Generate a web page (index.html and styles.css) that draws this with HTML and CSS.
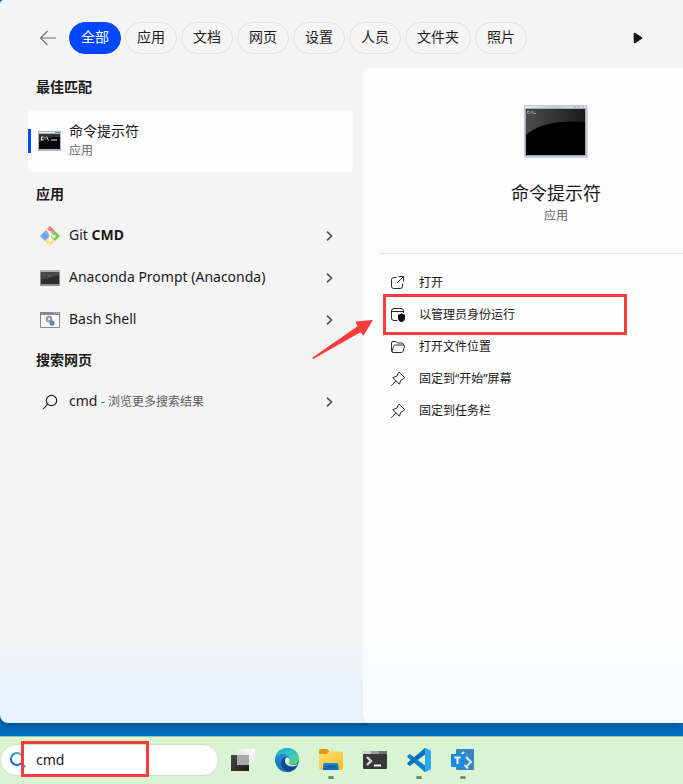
FILE: index.html
```html
<!DOCTYPE html>
<html lang="zh-CN">
<head>
<meta charset="utf-8">
<meta name="viewport" content="width=device-width, initial-scale=1">
<title>cmd</title>
<link rel="stylesheet" href="styles.css">
</head>
<body>
<svg class="defs" aria-hidden="true">
  <defs>
    <linearGradient id="ring" x1="0" y1="1" x2="1" y2="0"><stop offset="0" stop-color="#0a5fc4"/><stop offset=".5" stop-color="#1a86d8"/><stop offset="1" stop-color="#46d3a4"/></linearGradient>
    <linearGradient id="dark" x1="0" y1="0" x2="1" y2="1"><stop offset="0" stop-color="#4a4a4a"/><stop offset="1" stop-color="#1c1c1c"/></linearGradient>
    <linearGradient id="light" x1="0" y1="1" x2="1" y2="0"><stop offset="0" stop-color="#d8d8d8"/><stop offset="1" stop-color="#ffffff"/></linearGradient>
    <linearGradient id="gloss" x1="0" y1="0" x2="1" y2="0"><stop offset="0" stop-color="#4c4c4c"/><stop offset="1" stop-color="#1b1b1b"/></linearGradient>
    <linearGradient id="frame" x1="0" y1="0" x2="1" y2="0"><stop offset="0" stop-color="#e9eef3"/><stop offset=".5" stop-color="#c5ccd6"/><stop offset="1" stop-color="#e4e6ea"/></linearGradient>
    <linearGradient id="edge-top" x1="0" y1="0" x2="1" y2="1"><stop offset="0" stop-color="#24a8d4"/><stop offset=".55" stop-color="#35c5c4"/><stop offset="1" stop-color="#6ade55"/></linearGradient>
    <linearGradient id="edge-left" x1="0" y1="0" x2="0" y2="1"><stop offset="0" stop-color="#239ee0"/><stop offset="1" stop-color="#126abc"/></linearGradient>
    <linearGradient id="folder" x1="0" y1="0" x2="1" y2="1"><stop offset="0" stop-color="#ffe07a"/><stop offset="1" stop-color="#fbbc1e"/></linearGradient>
    <linearGradient id="tray" x1="0" y1="0" x2="0" y2="1"><stop offset="0" stop-color="#1b8de0"/><stop offset="1" stop-color="#0d63b5"/></linearGradient>
  </defs>
  <symbol id="chevron" viewBox="0 0 8 12"><path d="M2 1.700 6.500 6 2 10.300" fill="none" stroke="#555" stroke-width="1.700"/></symbol>
  <symbol id="pin" viewBox="0 0 16 16"><path d="M9.400 1.500 14.500 6.600 13.600 7.800 10.700 9.300 9.400 13.200 2.800 6.600 6.700 5.300 8.200 2.400ZM5.900 10 1.500 14.500" fill="none" stroke="#2c2c2c" stroke-linejoin="round" stroke-linecap="round"/></symbol>
</svg>

<main class="panel">
  <nav class="filters" aria-label="筛选">
    <button class="back" aria-label="返回"><svg width="18" height="16" viewBox="0 0 18 16"><path d="M18 8H2.500M9.500 1l-7 7 7 7" fill="none" stroke="#707070" stroke-width="1.100"/></svg></button>
    <button class="pill pill-active">全部</button>
    <button class="pill">应用</button>
    <button class="pill">文档</button>
    <button class="pill">网页</button>
    <button class="pill">设置</button>
    <button class="pill">人员</button>
    <button class="pill">文件夹</button>
    <button class="pill">照片</button>
    <button class="more" aria-label="更多"><svg width="10" height="12" viewBox="0 0 10 12"><path d="M1.500 1.500v9L8.500 6Z" fill="#151515" stroke="#151515" stroke-width="1.600" stroke-linejoin="round"/></svg></button>
  </nav>

  <div class="columns">
    <section class="results">
      <h2>最佳匹配</h2>
      <a class="best" href="#">
        <svg class="best-icon" width="24" height="20" viewBox="0 0 24 20"><path d="M0 0h23v20H0z" fill="#aeb4ba"/><path d="M1 1h16v1H1z" fill="#e8edf2"/><path d="M17 1h5v1h-5z" fill="#6f8196"/><path d="M1 3h21v15H1z" fill="#050505"/><path d="M1 3h21v3Q8 5 1 12z" fill="#343434"/><path d="M5.500 6H3.500v3h2M7 6.500v.8M7 8.300v.7M8.500 5.500l2 4M13 9h6" fill="none" stroke="#eee" stroke-width="1"/></svg>
        <span class="best-text"><span class="name">命令提示符</span><span class="kind">应用</span></span>
      </a>

      <h2>应用</h2>
      <a class="row" href="#">
        <svg class="row-icon" width="20" height="20" viewBox="0 0 20 20"><path d="m10 0 5 5-5 5-5-5z" fill="#f47c7c"/><path d="m5 5 5 5-5 5-5-5z" fill="#6fa8fa"/><path d="m15 5 5 5-5 5-5-5z" fill="#7bc853"/><path d="m10 10 5 5-5 5-5-5z" fill="#ffe27d"/><path d="M6.500 3.500 10 7v8M10 7.500l4 3" fill="none" stroke="#fff" stroke-width="1.500"/><circle cx="10" cy="6.800" r="1.700" fill="#fff"/><circle cx="10" cy="14" r="1.700" fill="#fff"/><circle cx="14" cy="10.500" r="1.700" fill="#fff"/></svg>
        <span class="name">Git <b>CMD</b></span><svg class="chevron" width="8" height="12"><use href="#chevron"/></svg>
      </a>
      <a class="row" href="#">
        <svg class="row-icon" width="20" height="16" viewBox="0 0 20 16"><path d="M0 0h20v16H0z" fill="#8d8d8d"/><path d="M0 0h20v2H0z" fill="#b0b0b0"/><path d="M1 2h18v12H1z" fill="#2b2d30"/><path d="M1 2h18v3L1 10z" fill="#45474a"/><path d="M3 5h3M8 6h3" stroke="#666"/></svg>
        <span class="name">Anaconda Prompt (Anaconda)</span><svg class="chevron" width="8" height="12"><use href="#chevron"/></svg>
      </a>
      <a class="row" href="#">
        <svg class="row-icon" width="20" height="16" viewBox="0 0 20 16"><path d="M.5.5h19v15H.5z" fill="#fafafa" stroke="#8b8b8b"/><path d="M0 0h20v3H0z" fill="#888"/><path d="M14 1h1M16 1h1M18 1h1" stroke="#eee"/><circle cx="9" cy="7" r="2.300" fill="#dbe5ef" stroke="#8a9bae" stroke-width="2"/><circle cx="12" cy="11" r="1.700" fill="#b9c5d1" stroke="#66788c" stroke-width="1.800"/></svg>
        <span class="name">Bash Shell</span><svg class="chevron" width="8" height="12"><use href="#chevron"/></svg>
      </a>

      <h2>搜索网页</h2>
      <a class="row" href="#">
        <svg class="row-icon" width="20" height="16" viewBox="0 0 20 16"><circle cx="11.500" cy="6.500" r="5.200" fill="none" stroke="#222" stroke-width="1.200"/><path d="m7.800 10.200-4.600 4.600" stroke="#222" stroke-width="1.200"/></svg>
        <span class="name">cmd <small>- 浏览更多搜索结果</small></span><svg class="chevron" width="8" height="12"><use href="#chevron"/></svg>
      </a>
    </section>

    <section class="preview">
      <div class="hero">
        <svg width="64" height="53" viewBox="0 0 64 53"><path d="M1 1h63v52H1z" fill="#d6d6d6"/><path d="M0 0h62v52H0z" fill="url(#frame)"/><path d="M.5.500h62v51H.5z" fill="none" stroke="#c3c9d2"/><path d="M49 2h3M53 2h3M58 2h2" stroke="#9da4ad"/><path d="M1 3h61v48H1z" fill="#9eabbd"/><path d="M2 4h59v46H2z" fill="#000"/><path d="M2 4h59v13Q20 14 2 30z" fill="url(#gloss)"/><path d="M5.500 6.500H3.500v2h2M7 6.500v2M8 6l1.500 3M10 8.500h2" fill="none" stroke="#aaa" stroke-width=".8"/></svg>
        <h1>命令提示符</h1>
        <p class="kind">应用</p>
      </div>
      <ul class="actions">
        <li><button><svg width="16" height="16" viewBox="0 0 16 16"><path d="M6.500 2.500H3.800Q1.500 2.500 1.500 4.800v6.400q0 2.300 2.300 2.300h6.400q2.300 0 2.300-2.300V8.500M8.500 1.500h5v5M13.300 1.700 7 8" fill="none" stroke="#2c2c2c"/></svg>打开</button></li>
        <li class="marked"><button><svg width="16" height="16" viewBox="0 0 16 16"><path d="M7.500 13.500H4Q1.500 13.500 1.500 11V4Q1.500 1.500 4 1.500h7Q13.500 1.500 13.500 4v2M1.500 4.500h12" fill="none" stroke="#2c2c2c"/><path d="M11.500 6.300q1.800 1.400 3.500 1.400v3.300q0 3-3.500 4.300Q8 14 8 11V7.700q1.800 0 3.500-1.400z" fill="#111"/></svg>以管理员身份运行</button>
          <span class="mark-box"></span>
          <svg class="mark-arrow" width="62" height="42" viewBox="0 0 62 42"><path d="M61 1 51.500 16.800 48.500 13.300 1.200 40 .2 38.800 45.500 7.200 43.500 2.500z" fill="#fc3b3b"/></svg>
        </li>
        <li><button><svg width="16" height="16" viewBox="0 0 16 16"><path d="M3 13.500Q1.500 13.200 1.500 11.500V4q0-1.500 1.500-1.500h3L7.500 4H12q1.500 0 1.500 2M3 13.500Q1.800 13 2.300 11.500L3.700 7.200Q4.100 6 5.300 6H13q1.800 0 1.400 1.800l-1.200 4.300q-.4 1.400-1.800 1.400z" fill="none" stroke="#2c2c2c" stroke-linejoin="round"/></svg>打开文件位置</button></li>
        <li><button><svg width="16" height="16"><use href="#pin"/></svg>固定到“开始”屏幕</button></li>
        <li><button><svg width="16" height="16"><use href="#pin"/></svg>固定到任务栏</button></li>
      </ul>
    </section>
  </div>
</main>

<footer class="taskbar">
  <label class="search">
    <svg width="18" height="18" viewBox="0 0 18 18"><circle cx="8" cy="8" r="6" fill="none" stroke="url(#ring)" stroke-width="2"/><path d="m12.500 12.500 3.500 3.500" stroke="#1a80d8" stroke-width="2"/></svg>
    <input type="text" value="cmd" aria-label="搜索">
    <span class="search-mark"></span>
  </label>
  <button class="task" aria-label="任务视图"><svg width="24" height="24" viewBox="0 0 24 24"><path d="M0 7h18v16H0z" fill="url(#dark)"/><path d="M6 1h18v16H6z" fill="url(#light)"/><path d="M6 7h12v10H6z" fill="#aaa"/></svg></button>
  <button class="task" aria-label="Edge"><svg width="24" height="24" viewBox="0 0 24 24"><circle cx="12" cy="12" r="12" fill="url(#edge-left)"/><path d="M.3 9.500C1.500 3.500 6.500 0 12 0c7 0 12 5 12 10.500 0 4-3 6-6.200 6-2.300 0-4-1-4-2 0-.8.9-1.200.9-2.800C14.700 8.500 11.500 6 8 6 4.500 6 1.500 7.500.3 9.500z" fill="url(#edge-top)"/><path d="M9 9.200c-3.500 2.500-4 8.300-.2 11.800 1.600 1.600 3.500 2.700 5.200 2.800 3.500-.5 6.500-2.500 8.200-5.500.4-.8-.2-1.100-.8-.8-4.800 2.300-10.500.5-11.400-4C9.700 12 10 10.600 11 9.700 10.600 9 9.800 8.700 9 9.200z" fill="#114a8d"/><path d="M10.500 10.500c-1.500 2.800.2 7 5 7.700 2.800.4 5.200-.4 6.300-1 .7-.3.700-1 .1-.8-3.800 1.500-8.100.3-8.100-1.900 0-.8.9-1.200.9-2.800 0-2-2.900-3.200-4.200-1.200z" fill="#d8f4d3"/></svg></button>
  <button class="task running" aria-label="文件资源管理器"><svg width="24" height="24" viewBox="0 0 24 24"><path d="M0 3q0-2 2-2h6l3 3-3 3H0z" fill="#dc9a0c"/><path d="M0 6h7.500L10 3.500h12q2 0 2 2V20q0 2-2 2H2q-2 0-2-2z" fill="url(#folder)"/><path d="M4 22v-5q0-2 2-2h11.500q2 0 2 2v5z" fill="url(#tray)"/><path d="M7.500 18.500h8.500" stroke="#0a519c" stroke-width="1.500" stroke-linecap="round"/></svg></button>
  <button class="task" aria-label="终端"><svg width="24" height="24" viewBox="0 0 24 24"><rect y="3" width="24" height="18" rx="1" fill="#383838"/><path d="M0 6V4q0-1 1-1h7v3z" fill="#cfcfcf"/><path d="M8 3h8v3H8z" fill="#9b9b9b"/><path d="M16 3h7q1 0 1 1v2h-8z" fill="#737373"/><path d="m4 9 4 4-4 4" fill="none" stroke="#d8d8d8" stroke-width="2.400"/><path d="M11 17.500h7" stroke="#fff" stroke-width="2"/></svg></button>
  <button class="task running" aria-label="Visual Studio Code"><svg width="24" height="24" viewBox="0 0 24 24"><path d="M.7 7.500 2.800 6 18 17.500V24L.8 9.400q-.9-.9-.1-1.900z" fill="#0f80cc"/><path d="M.7 16.500 2.800 18 18 6.500V0L.8 14.600q-.9.900-.1 1.900z" fill="#0c6fb9"/><path d="M17.500.200q.5-.4 1.200-.1L23 2q1 .5 1 1.500v17q0 1-1 1.500l-4.300 1.900q-.7.300-1.200-.1.500.1.500-.8V1q0-.9-.5-.8z" fill="#2aabf1"/></svg></button>
  <button class="task running" aria-label="PowerToys"><svg width="24" height="24" viewBox="0 0 24 24"><rect x="5" y="1" width="18" height="21" rx="1" fill="#3686c4"/><path d="m13.500 17 3.500 3.500M13 4l-3 3M15 9l5 5-5 5" fill="none" stroke="#d8edfb" stroke-width="2"/><rect y="6" width="13" height="13" rx="1" fill="#168be0"/><path d="M3.500 9.500h6M6.500 9.500V16" stroke="#fff" stroke-width="2"/></svg></button>
</footer>
</body>
</html>
```
FILE: styles.css
```css
* { box-sizing: border-box; }

body {
  margin: 0;
  min-height: 100vh;
  display: flex;
  flex-direction: column;
  background: #0070c0;
  color: #1b1b1b;
  font-family: "Noto Sans", "Noto Sans CJK SC", sans-serif;
  font-size: 14px;
  line-height: 20px;
}

button, input { font: inherit; color: inherit; border: 0; padding: 0; background: none; }
a { color: inherit; text-decoration: none; }
h1, h2, p, ul { margin: 0; padding: 0; font-weight: 400; }
svg { display: block; flex: none; }
.defs { position: absolute; width: 0; height: 0; }

.panel {
  flex: 1;
  display: flex;
  flex-direction: column;
  margin-bottom: 13px;
  border-radius: 4px 0 0 8px;
  overflow: hidden;
  background: linear-gradient(#f4f4f4 0, #f4f4f4 89%, #e9f3fd 95%, #e6f3fc 100%);
  box-shadow: 0 1px 10px #003c6e;
}

.filters { display: flex; align-items: center; gap: 4px; padding: 22px 40px 14px 38px; }
.back { width: 27px; height: 32px; }
.pill {
  height: 32px;
  padding: 0 11px 2px;
  border: 1px solid #e2e2e2;
  border-radius: 16px;
  background: #f5f5f5;
  white-space: nowrap;
}
.pill-active { background: #0047ff; border-color: #0047ff; color: #fff; }
.more { margin-left: auto; padding: 8px 0; }

.columns { flex: 1; display: flex; }
.results { flex: 0 0 363px; padding: 0 10px 0 28px; }
.results h2 {
  padding-left: 8px;
  font-size: 14px;
  font-weight: 700;
  line-height: 38px;
  height: 40px;
}
.best {
  display: flex;
  align-items: center;
  gap: 7px;
  height: 62px;
  margin: 2px 0 3px;
  padding-left: 10px;
  border-radius: 4px;
  background: linear-gradient(#0047ff, #0047ff) 0 50% / 3px 24px no-repeat #fcfcfc;
}
.best-text { display: flex; flex-direction: column; }
.kind { font-size: 12px; color: #666; }

.row { display: flex; align-items: center; gap: 9px; height: 42px; padding: 0 20px 0 12px; }
.row .name { flex: 1; padding-bottom: 2px; }
.row small { font-size: 12px; color: #5c5c5c; }

.preview {
  flex: 1;
  border-radius: 8px 0 0 8px;
  background: linear-gradient(#fcfcfc, #fcfcfd 86%, #f8fcff 95%);
}
.hero { display: flex; flex-direction: column; align-items: center; padding: 37px 0 27px 66px; }
.hero h1 { margin-top: 22px; font-size: 18px; line-height: 26px; }
.actions {
  list-style: none;
  margin-left: 16px;
  padding: 13px 0 0 11px;
  border-top: 1px solid #e4e6e8;
  font-size: 12px;
}
.actions li { position: relative; }
.actions button { display: flex; align-items: center; gap: 13px; height: 32px; width: 100%; text-align: left; }
.mark-box { position: absolute; left: -7px; top: -5px; width: 244px; height: 41px; border: 3px solid #fc3b3b; pointer-events: none; }
.mark-arrow { position: absolute; left: -78px; top: 20px; pointer-events: none; }

.taskbar { display: flex; align-items: center; height: 48px; padding-bottom: 2px; border-top: 1px solid #9dbfae; background: #d9f4d2; }
.search {
  position: relative;
  display: flex;
  align-items: center;
  gap: 9px;
  width: 219px;
  height: 32px;
  margin-right: 2px;
  padding-left: 8px;
  border: 1px solid #c9e3c3;
  border-radius: 16px;
  background: #fff;
}
.search input { flex: 1; min-width: 0; height: 28px; outline: 0; }
.search-mark { position: absolute; left: 20px; top: -4px; width: 128px; height: 36px; border: 3px solid #fc3b3b; pointer-events: none; }
.task { position: relative; width: 44px; height: 40px; display: flex; align-items: center; justify-content: center; }
.running::after {
  content: "";
  position: absolute;
  bottom: 1px;
  width: 6px;
  height: 3px;
  border-radius: 2px;
  background: #788b75;
}
```
